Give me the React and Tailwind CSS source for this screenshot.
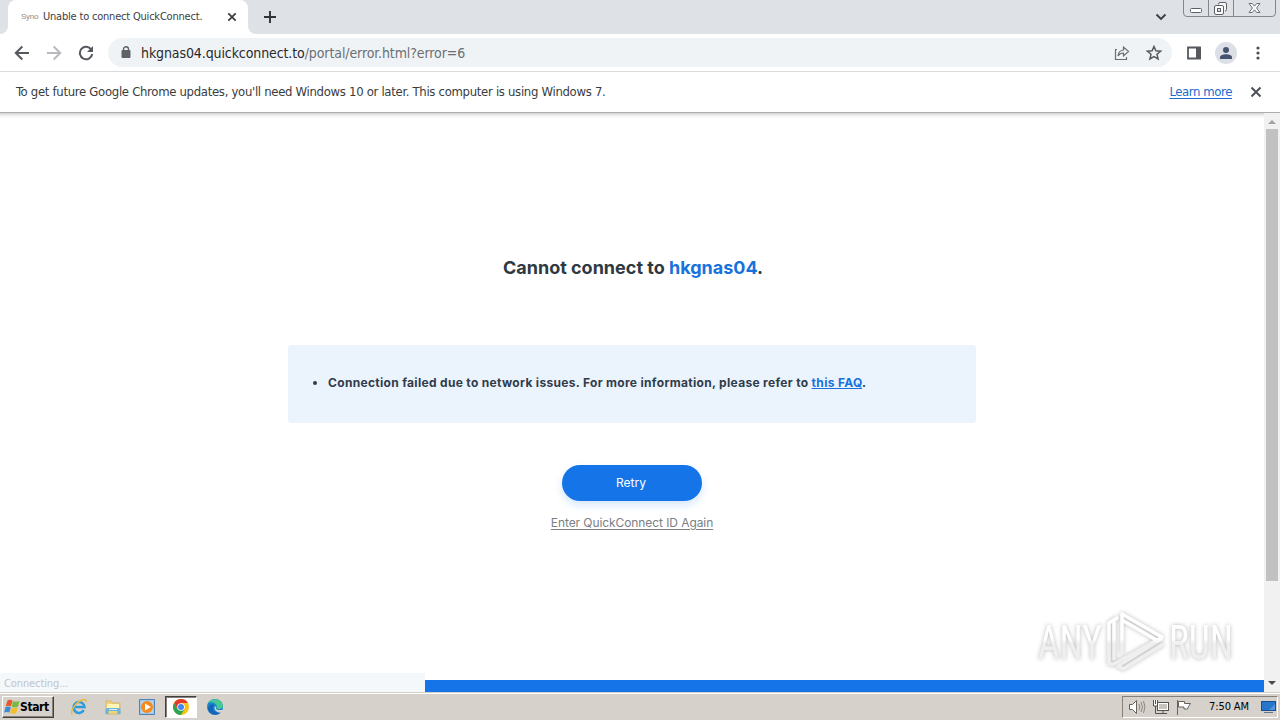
import React from "react";

const ui = "font-['DejaVu_Sans_Condensed','DejaVu_Sans',sans-serif] [font-stretch:condensed]";

function TabStrip() {
  return (
    <div className="relative flex h-[34px] shrink-0 bg-[#dee1e6] pl-2">
      <div className="relative flex h-[34px] w-[240px] items-center rounded-t-lg bg-white pl-[13px] pr-[10px]">
        <svg className="absolute bottom-0 -left-2 h-2 w-2" viewBox="0 0 8 8"><path d="M8 0v8H0a8 8 0 0 0 8-8z" fill="#fff" /></svg>
        <svg className="absolute bottom-0 -right-2 h-2 w-2" viewBox="0 0 8 8"><path d="M0 0v8h8a8 8 0 0 1-8-8z" fill="#fff" /></svg>
        <span className="w-[22px] font-['Liberation_Sans',sans-serif] text-[8px] leading-none tracking-[-0.3px] text-[#8d8d8d]">Syno</span>
        <span className="whitespace-nowrap text-[11px] tracking-[-0.2px] text-[#3c4043]">Unable to connect QuickConnect.</span>
        <svg className="ml-auto h-3 w-3" viewBox="0 0 12 12"><path d="M2.300 2.300l7.400 7.400M9.700 2.300l-7.400 7.400" stroke="#3c4043" strokeWidth="1.800" /></svg>
      </div>
      <svg className="ml-[15px] mt-[10px] h-[14px] w-[14px]" viewBox="0 0 14 14"><path d="M7 1v12M1 7h12" stroke="#303438" strokeWidth="1.9" /></svg>
      <svg className="ml-auto mr-4 mt-[11px] h-3 w-3" viewBox="0 0 12 12"><path d="M1.500 3.500L6 8l4.500-4.500" fill="none" stroke="#3c4043" strokeWidth="1.9" /></svg>
      <svg className="mr-[3px] h-[18px] w-[94px]" viewBox="0 0 94 18">
        <path d="M.5 0v13q0 3.500 3.500 3.500h85q3.500 0 3.500-3.500V0M25.500 0v16M50.500 0v16" fill="none" stroke="#83878e" />
        <rect x="7.500" y="8.500" width="11" height="4" rx="1" fill="#fff" stroke="#5d6067" />
        <path d="M35.500 4.500V4q0-1.500 1.500-1.500h5q1.500 0 1.500 1.500v5.500q0 1.500-1.500 1.500" fill="#f6f6f7" stroke="#5d6067" />
        <rect x="31.500" y="5.500" width="9" height="9" rx="1.500" fill="#fff" stroke="#5d6067" />
        <rect x="34.500" y="8.500" width="3" height="3" fill="#dee1e6" stroke="#5d6067" />
        <path d="M66 3.500h3.200l2.300 2.700 2.300-2.700H77l-3.500 4.500 3.500 4.500h-3.200l-2.300-2.700-2.300 2.700H66L69.500 8z" fill="#fff" stroke="#5d6067" strokeWidth=".9" />
      </svg>
    </div>
  );
}

function Toolbar() {
  return (
    <div className="flex h-[38px] shrink-0 items-center border-b border-[#d9dbdd] bg-white pl-[14px]">
      <svg className="h-4 w-4" viewBox="0 0 16 16"><path d="M15 8H2M8.300 1.500L1.800 8l6.500 6.500" fill="none" stroke="#55595e" strokeWidth="2" /></svg>
      <svg className="ml-4 h-4 w-4" viewBox="0 0 16 16"><path d="M1 8h13M7.700 1.500L14.200 8l-6.500 6.500" fill="none" stroke="#b7b9bc" strokeWidth="2" /></svg>
      <svg className="ml-4 h-4 w-4" viewBox="0 0 16 16"><path d="M13.300 4.700A6.200 6.200 0 1 0 14.200 9" fill="none" stroke="#55595e" strokeWidth="2" /><path d="M15 1v6H9z" fill="#55595e" /></svg>
      <div className="ml-[14px] flex h-[29px] w-[1064px] items-center rounded-full bg-[#f0f3f5] pl-[13px] pr-[10px]">
        <svg className="h-3 w-[10px] -translate-y-px" viewBox="0 0 10 12"><rect y="4" x=".5" width="9" height="8" rx="1" fill="#5f6368" /><path d="M2.500 5V3.300a2.500 2.500 0 0 1 5 0V5" fill="none" stroke="#5f6368" strokeWidth="1.400" /></svg>
        <span className="ml-[10px] mt-px whitespace-nowrap text-[14px] tracking-[-0.1px] text-[#6b6f74]"><span className="text-[#282a2e]">hkgnas04.quickconnect.to</span>/portal/error.html?error=6</span>
        <svg className="ml-auto h-4 w-4" viewBox="0 0 16 16"><path d="M3 4.500H1.500v10h11V12M9.500 5V2l5 4.500-5 4.500V8C6.500 8 5 9.300 4 11c.3-3.500 2-5.600 5.500-6z" fill="none" stroke="#696d72" strokeWidth="1.200" /></svg>
        <svg className="ml-4 h-4 w-4" viewBox="0 0 16 16"><path d="M8 1.500l1.900 4.300 4.700.4-3.600 3.100 1.100 4.600L8 11.500l-4.100 2.400L5 9.300 1.400 6.200l4.700-.4z" fill="none" stroke="#55595e" strokeWidth="1.500" /></svg>
      </div>
      <svg className="ml-[15px] h-[14px] w-[14px]" viewBox="0 0 14 14"><path d="M1 1.500h12v11H1z" fill="none" stroke="#55595e" strokeWidth="1.800" /><path d="M9 1H14v12H9z" fill="#55595e" /></svg>
      <svg className="ml-[14px] h-[22px] w-[22px]" viewBox="0 0 22 22"><circle cx="11" cy="11" r="11" fill="#dce0e6" /><circle cx="11" cy="8" r="3" fill="#46536e" /><path d="M5 17v-1.700C5 13 9 12.300 11 12.300s6 .7 6 3V17z" fill="#46536e" /></svg>
      <svg className="ml-[19px] h-[14px] w-1" viewBox="0 0 4 14" fill="#4b4f54"><circle cx="2" cy="2" r="1.600" /><circle cx="2" cy="7" r="1.600" /><circle cx="2" cy="12" r="1.600" /></svg>
    </div>
  );
}

function InfoBar() {
  return (
    <div className="flex h-[41px] shrink-0 items-center border-b border-[#adadad] bg-white pl-4 pr-[18px] text-[13px] text-[#3a3c40]">
      <span className="whitespace-nowrap tracking-[-0.31px]">To get future Google Chrome updates, you'll need Windows 10 or later. This computer is using Windows 7.</span>
      <a className="ml-auto whitespace-nowrap tracking-[-0.4px] text-[#1a6bce] underline underline-offset-2">Learn more</a>
      <svg className="ml-[18px] h-3 w-3" viewBox="0 0 12 12"><path d="M1.500 1.500l9 9M10.500 1.500l-9 9" stroke="#4b4f54" strokeWidth="1.900" /></svg>
    </div>
  );
}

function Watermark() {
  return (
    <svg className="absolute left-[1030px] top-[490px] h-[75px] w-[230px] overflow-visible [filter:drop-shadow(0_0_2px_rgba(0,0,0,0.28))]" viewBox="0 0 230 75">
      <defs>
        <linearGradient id="fade" x1="0" y1="0" x2="0" y2="75" gradientUnits="userSpaceOnUse">
          <stop offset=".48" stopColor="#fff" /><stop offset=".54" stopColor="#efefef" />
        </linearGradient>
      </defs>
      <g fill="url(#fade)" fontFamily="Roboto, sans-serif" fontSize="49" fontWeight="400">
        <text x="8" y="56" textLength="64" lengthAdjust="spacingAndGlyphs">ANY</text>
        <text x="139" y="56" textLength="64" lengthAdjust="spacingAndGlyphs">RUN</text>
      </g>
      <g fill="none" stroke="url(#fade)" strokeWidth="3.500" strokeLinejoin="round" strokeLinecap="round">
        <path d="M92 49V11l40 23-4 4-36-21" />
        <path d="M87 15l-8 5v41h5l45-25" />
        <path d="M84 17v39" />
        <path d="M132 42L93 66l-5-3 43-27" />
      </g>
    </svg>
  );
}

function Page() {
  return (
    <div className="relative flex h-[579px] shrink-0">
      <main className="flex w-[1264px] flex-col items-center bg-[linear-gradient(#cfcfcf,#ececec_2px,#fff_5px)] font-['Inter',sans-serif] [font-stretch:normal]">
        <h1 className="mt-[141px] whitespace-nowrap pl-[2px] text-[18px] font-bold leading-[28px] text-[#2f3942]">Cannot connect to <span className="text-[#1872dc]">hkgnas04</span>.</h1>
        <div className="mt-[63px] flex h-[78px] w-[688px] items-center rounded bg-[#ebf3fc] pb-[3px] pl-[25px] text-[12px] font-bold text-[#303c4a]">
          <span className="h-1 w-1 rounded-full bg-[#303c4a]" />
          <p className="ml-[11px] whitespace-nowrap tracking-[0.32px]">Connection failed due to network issues. For more information, please refer to <a className="text-[#1872dc] underline">this FAQ</a>.</p>
        </div>
        <button className="mt-[42px] h-[36px] w-[140px] rounded-full bg-[#1474e8] pr-[2px] font-['Inter',sans-serif] text-[12px] text-white shadow-[0_4px_8px_rgba(20,116,232,0.18)]">Retry</button>
        <a className="mt-[13px] whitespace-nowrap text-[12px] leading-[18px] tracking-[-0.08px] text-[#7b7f82] underline underline-offset-2">Enter QuickConnect ID Again</a>
        <div className="mt-auto flex w-full items-end">
          <div className="h-[19px] w-[425px] bg-[#f5f8fb] pl-1 text-[11px] leading-[20px] tracking-[-0.1px] text-[#c0c5ca]"><span className={ui}>Connecting...</span></div>
          <div className="h-3 grow bg-[#1474e8]" />
        </div>
      </main>
      <div className="flex w-4 flex-col items-center bg-[#f1f1f1]">
        <svg className="h-4 w-4" viewBox="0 0 16 16"><path d="M4 11l4-4 4 4z" fill="#a3a3a3" /></svg>
        <div className="h-[452px] w-3 bg-[#c1c1c1]" />
        <svg className="mt-auto h-4 w-4" viewBox="0 0 16 16"><path d="M4 5l4 4 4-4z" fill="#4a4a4a" /></svg>
      </div>
      <Watermark />
    </div>
  );
}

function Taskbar() {
  return (
    <div className="flex h-7 shrink-0 items-center border-t border-[#d4d0c8] bg-[#d6d1ca] pt-px shadow-[inset_0_1px_0_#fff]">
      <div className="ml-[2px] flex h-[22px] w-[52px] items-center border border-b-[#404040] border-l-white border-r-[#404040] border-t-white pl-px shadow-[inset_-1px_-1px_0_#85817a]">
        <svg className="h-4 w-4" viewBox="0 0 16 16">
          <path d="M3.500 1.500q2.500-1.500 5 0L7 7.300q-2.500-1.300-5.300 0z" fill="#e8582a" /><path d="M9 2q2.500 1.500 6.500 0L14 7.800q-3.500 1.300-6.300 0z" fill="#79b941" /><path d="M1.500 8.100q2.500-1.300 5.300 0l-1.400 5.500q-2.700-1.300-5.200 0z" fill="#3b8cd6" /><path d="M7.500 8.600q2.800 1.300 6.200 0L12.300 14q-3.200 1.300-6.200 0z" fill="#f5bd27" />
        </svg>
        <span className="text-[12px] font-bold tracking-[-0.4px] text-black">Start</span>
      </div>
      <svg className="ml-4 h-[18px] w-[18px]" viewBox="0 0 18 18">
        <path d="M13.800 12.200A5.500 5.500 0 1 1 14.500 9H5" fill="none" stroke="#2e9bdd" strokeWidth="2.600" />
        <path d="M2.500 16.500C-.5 14 5 5 12 2q4.500-1.500 4 2" fill="none" stroke="#e8bd3b" strokeWidth="1.400" />
      </svg>
      <svg className="ml-4 h-[18px] w-[18px]" viewBox="0 0 18 18">
        <path d="M2 3h5l1 2h8v11H2z" fill="#efd47c" stroke="#caa94d" strokeWidth=".6" /><path d="M3 6h12v5H3z" fill="#fff3b6" /><path d="M1.500 16v-4q0-2 2-2h11q2 0 2 2v4h-3v-3h-9v3z" fill="#69b5dc" /><path d="M5 11.500h8" stroke="#d4f0ff" />
      </svg>
      <svg className="ml-4 h-[18px] w-[18px]" viewBox="0 0 18 18">
        <path d="M1.500 1.500h15v15h-15z" fill="#9dc6e8" stroke="#4d83b7" /><path d="M3 3h12v12H3z" fill="#b9d6ee" /><circle cx="9" cy="9" r="6" fill="#f28a1e" /><path d="M7 5.500v7l6-3.500z" fill="#fff" />
      </svg>
      <div className="ml-[9px] flex h-[22px] w-8 items-center justify-center border border-b-white border-l-[#404040] border-r-white border-t-[#404040] bg-white shadow-[inset_1px_1px_0_#85817a]">
        <svg className="h-4 w-4" viewBox="0 0 16 16">
          <circle cx="8" cy="8" r="8" fill="#fbc116" /><path d="M1.070 4a8 8 0 0 0 6.930 12l3.500-6L8 8 4.500 10z" fill="#2da44f" /><path d="M1.070 4A8 8 0 0 1 14.930 4H8z" fill="#e33b2e" /><path d="M1.070 4L4.500 10 8 8V4z" fill="#e33b2e" /><circle cx="8" cy="8" r="3.800" fill="#fff" /><circle cx="8" cy="8" r="3" fill="#4285f4" />
        </svg>
      </div>
      <svg className="ml-[9px] h-[18px] w-[18px]" viewBox="0 0 18 18">
        <circle cx="9" cy="9" r="8" fill="#1686cf" /><path d="M2 5C5 0 14 0 16.500 6c1.200 4-1 5-4 5-2 0-2-1-1.500-2C11 5 5 3 2 5z" fill="#45c991" /><path d="M8 8c-3 3 0 8 7 6-5 5-12 2-13-3C2 6 8 5 8 8z" fill="#1764b6" /><path d="M9 8q2 1 1 3l2 1h5v2q-5 2-8-2-1-2 0-4z" fill="#d6d1ca" />
      </svg>
      <div className="ml-auto mr-[2px] flex h-[22px] w-[156px] items-center border border-b-white border-l-[#85817a] border-r-white border-t-[#85817a] pl-[5px]">
        <svg className="h-[18px] w-[18px]" viewBox="0 0 18 18"><path d="M1.500 6.500h3l4-4v13l-4-4h-3z" fill="#fff" stroke="#66635f" /><path d="M11 6q1.500 3 0 6M13 4q3 5 0 10M15.500 3q3 6 0 12" fill="none" stroke="#8b8782" /></svg>
        <svg className="ml-[6px] h-[18px] w-[18px]" viewBox="0 0 18 18"><rect x="5.500" y="4.500" width="11" height="8" fill="#c7c4bf" stroke="#55524e" /><rect x="6.500" y="5.500" width="9" height="6" fill="none" stroke="#fff" /><path d="M7 15.500h8M11 12.500v3M3.500 8v7.500H7" fill="none" stroke="#55524e" /><path d="M1.500 2v6h4V2M3.500 2v4" fill="#fff" stroke="#55524e" /></svg>
        <svg className="ml-[5px] h-[18px] w-[18px]" viewBox="0 0 18 18"><path d="M2.500 2v15" stroke="#66635f" /><path d="M3.500 3.500h6v2h6l-2 3 -1 2.500H9V9H3.500z" fill="#fff" stroke="#66635f" /></svg>
        <span className="ml-4 whitespace-nowrap text-[11px] tracking-[-0.1px] text-black">7:50 AM</span>
        <svg className="ml-auto h-4 w-4" viewBox="0 0 16 16"><path d="M0 2h15v10H0z" fill="#174f97" /><path d="M1 3h13v8H1z" fill="#2875cd" /><path d="M8 11L14 5v6z" fill="#4f95dd" /><path d="M3 13h9v1H3z" fill="#62778b" /></svg>
      </div>
    </div>
  );
}

export default function App() {
  return (
    <div className={"flex h-[720px] w-[1280px] flex-col overflow-hidden bg-white " + ui}>
      <TabStrip />
      <Toolbar />
      <InfoBar />
      <Page />
      <Taskbar />
    </div>
  );
}
